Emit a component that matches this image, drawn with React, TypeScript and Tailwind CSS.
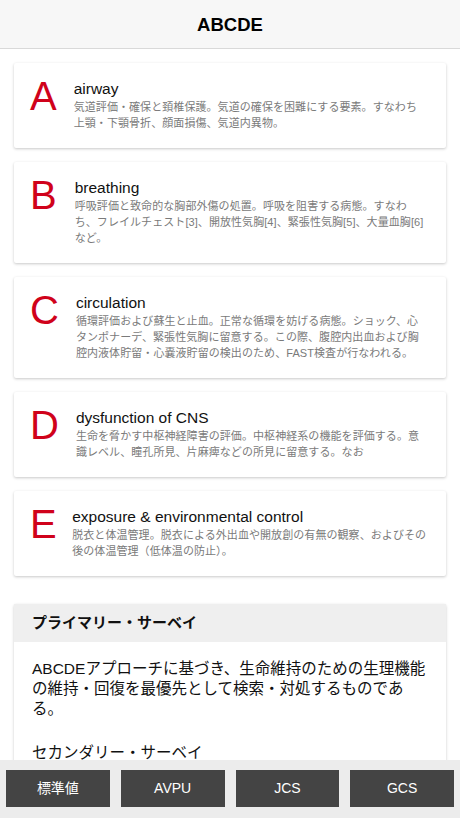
import React from "react";

type Item = { letter: string; title: string; desc: string; gap: string };

const items: Item[] = [
  {
    letter: "A",
    title: "airway",
    gap: "mr-[17px]",
    desc: "気道評価・確保と頚椎保護。気道の確保を困難にする要素。すなわち上顎・下顎骨折、顔面損傷、気道内異物。",
  },
  {
    letter: "B",
    title: "breathing",
    gap: "mr-[18px]",
    desc: "呼吸評価と致命的な胸部外傷の処置。呼吸を阻害する病態。すなわち、フレイルチェスト[3]、開放性気胸[4]、緊張性気胸[5]、大量血胸[6]など。",
  },
  {
    letter: "C",
    title: "circulation",
    gap: "mr-[17px]",
    desc: "循環評価および蘇生と止血。正常な循環を妨げる病態。ショック、心タンポナーデ、緊張性気胸に留意する。この際、腹腔内出血および胸腔内液体貯留・心嚢液貯留の検出のため、FAST検査が行なわれる。",
  },
  {
    letter: "D",
    title: "dysfunction of CNS",
    gap: "mr-[17px]",
    desc: "生命を脅かす中枢神経障害の評価。中枢神経系の機能を評価する。意識レベル、瞳孔所見、片麻痺などの所見に留意する。なお",
  },
  {
    letter: "E",
    title: "exposure & environmental control",
    gap: "mr-[15.5px]",
    desc: "脱衣と体温管理。脱衣による外出血や開放創の有無の観察、およびその後の体温管理（低体温の防止）。",
  },
];

const buttons = ["標準値", "AVPU", "JCS", "GCS"];

export default function App() {
  return (
    <div className="h-[818px] w-[460px] flex flex-col bg-white overflow-hidden font-['Liberation_Sans','Noto_Sans_CJK_JP',sans-serif] text-[#111]">
      <header className="h-[49px] shrink-0 bg-[#f7f7f7] border-b border-[#d9d9d9] flex items-center justify-center">
        <h1 className="text-[18.5px] font-bold text-black leading-none mt-[2px]">ABCDE</h1>
      </header>
      <main className="flex-1 overflow-hidden px-[14px] pt-[14px]">
        <div className="flex flex-col gap-[14px]">
          {items.map((it) => (
            <div
              key={it.letter}
              className="bg-white rounded-[2px] shadow-[0_1px_3px_rgba(0,0,0,0.22)] flex items-start pl-[16px] pr-[18.5px] pt-[16px] pb-[17px]"
            >
              <div className={`text-[40px] leading-[35px] text-[#d0021b] shrink-0 ${it.gap}`}>{it.letter}</div>
              <div className="flex-1 min-w-0">
                <div className="text-[15.5px] leading-[20px] text-[#111]">{it.title}</div>
                <p className="text-[11px] tracking-[0.07px] leading-[16px] text-[#7a7a7a]">{it.desc}</p>
              </div>
            </div>
          ))}
          <div className="mt-[14px] bg-white rounded-[2px] shadow-[0_1px_3px_rgba(0,0,0,0.22)]">
            <div className="h-[38px] bg-[#efefef] flex items-center px-[18px]">
              <span className="text-[15px] font-bold text-[#111]">プライマリー・サーベイ</span>
            </div>
            <div className="px-[18px] pt-[17px] pb-[20px] text-[15.5px] leading-[20px] text-[#111]">
              <p>
                ABCDEアプローチに基づき、生命維持のための生理機能の維持・回復を最優先として検索・対処するものである。
              </p>
              <p className="mt-[24px]">セカンダリー・サーベイ</p>
            </div>
          </div>
        </div>
      </main>
      <footer className="h-[58px] shrink-0 bg-[#ececec] px-[6px] pt-[10px] grid grid-cols-4 gap-[11px] items-start">
        {buttons.map((b) => (
          <button
            key={b}
            className="h-[37px] bg-[#444444] text-white text-[14px] flex items-center justify-center"
          >
            {b}
          </button>
        ))}
      </footer>
    </div>
  );
}
